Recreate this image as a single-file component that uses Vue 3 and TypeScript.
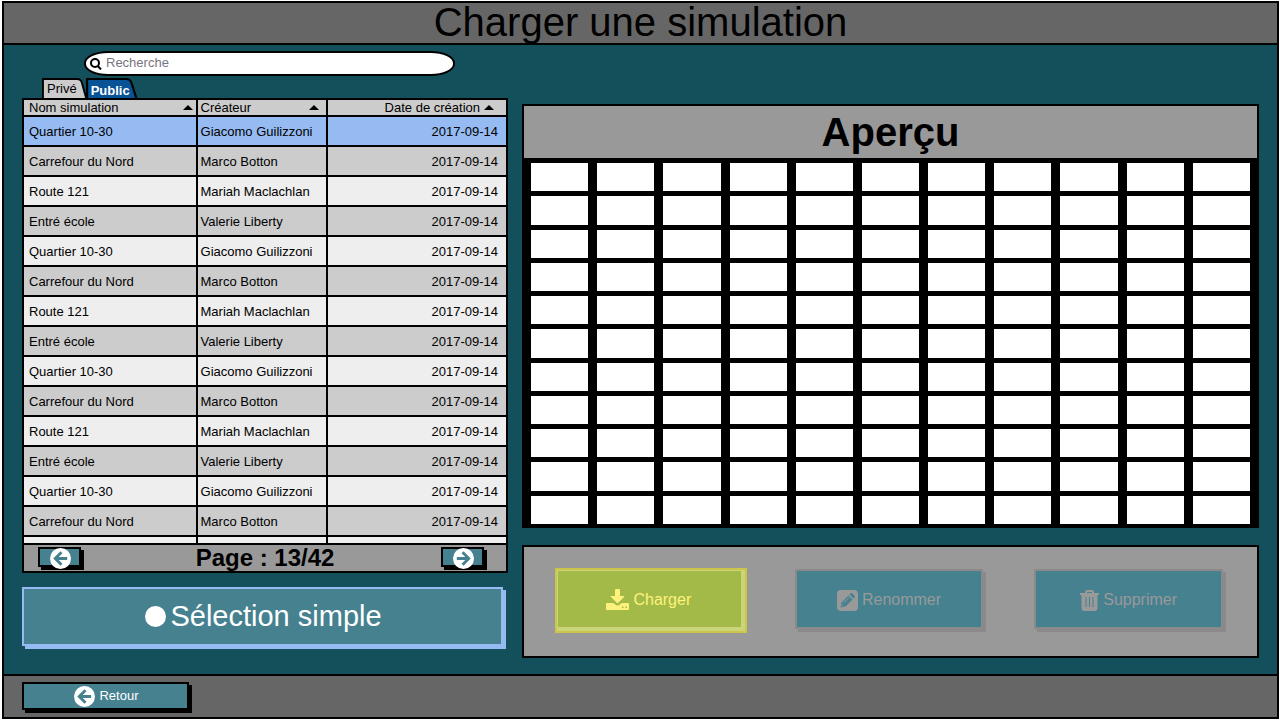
<script setup lang="ts">
import { computed, ref } from 'vue'

interface Simulation {
  id: number
  name: string
  author: string
  date: string
}

const samples: [string, string][] = [
  ['Quartier 10-30', 'Giacomo Guilizzoni'],
  ['Carrefour du Nord', 'Marco Botton'],
  ['Route 121', 'Mariah Maclachlan'],
  ['Entré école', 'Valerie Liberty'],
]

const simulations: Simulation[] = Array.from({ length: 14 }, (_, i) => ({
  id: i,
  name: samples[i % 4][0],
  author: samples[i % 4][1],
  date: '2017-09-14',
}))

const query = ref('')
const selected = ref(0)
const activeTab = ref('Public')
const tabs = ['Privé', 'Public']
const page = ref(13)
const pageCount = 42

const rows = computed(() =>
  simulations.filter((s) => s.name.toLowerCase().includes(query.value.toLowerCase())),
)
</script>

<template>
  <div class="screen">
    <header class="bar title-bar">
      <h1>Charger une simulation</h1>
    </header>

    <main class="content">
      <section class="left">
        <label class="search">
          <svg viewBox="0 0 12 12" aria-hidden="true">
            <circle cx="5" cy="5" r="4" />
            <path d="M8 8.2 11 11.4" />
          </svg>
          <input v-model="query" type="text" placeholder="Recherche" aria-label="Recherche" />
        </label>

        <nav class="tabs">
          <button
            v-for="tab in tabs"
            :key="tab"
            type="button"
            class="tab"
            :class="{ active: tab === activeTab }"
            @click="activeTab = tab"
          >
            <svg viewBox="0 0 48 22" preserveAspectRatio="none" aria-hidden="true">
              <path d="M1 22V1H37Q41 1 42 5L47 22" />
            </svg>
            <span>{{ tab }}</span>
          </button>
        </nav>

        <div class="table-box">
          <table>
            <colgroup>
              <col class="col-name" />
              <col class="col-author" />
              <col />
            </colgroup>
            <thead>
              <tr>
                <th><div>Nom simulation<i class="sort"></i></div></th>
                <th><div>Créateur<i class="sort"></i></div></th>
                <th><div class="end">Date de création<i class="sort"></i></div></th>
              </tr>
            </thead>
            <tbody>
              <tr
                v-for="row in rows"
                :key="row.id"
                :class="{ selected: row.id === selected }"
                @click="selected = row.id"
              >
                <td>{{ row.name }}</td>
                <td>{{ row.author }}</td>
                <td>{{ row.date }}</td>
              </tr>
              <tr>
                <td></td>
                <td></td>
                <td></td>
              </tr>
            </tbody>
          </table>
        </div>

        <div class="pager">
          <button type="button" class="sketch nav" aria-label="Page précédente" @click="page--">
            <svg class="round" viewBox="0 0 22 22" aria-hidden="true">
              <circle cx="11" cy="11" r="11" />
              <path d="M18 11H6M12 4.500 5.500 11l6.500 6.500" />
            </svg>
          </button>
          <strong>Page : {{ page }}/{{ pageCount }}</strong>
          <button type="button" class="sketch nav" aria-label="Page suivante" @click="page++">
            <svg class="round" viewBox="0 0 22 22" aria-hidden="true">
              <circle cx="11" cy="11" r="11" />
              <path d="M4 11h12M10 4.500l6.500 6.500-6.500 6.500" />
            </svg>
          </button>
        </div>

        <button type="button" class="sketch mode">
          <i class="dot"></i>Sélection simple
        </button>
      </section>

      <section class="right">
        <div class="preview">
          <h2>Aperçu</h2>
          <div class="cells">
            <div v-for="n in 121" :key="n" class="cell"></div>
          </div>
        </div>

        <div class="actions">
          <button type="button" class="action load">
            <svg class="icon-load" viewBox="0 0 23 21" aria-hidden="true">
              <path d="M9 1Q9 0 10 0h3q1 0 1 1v6h4q1 0 0 1l-6 6q-.5.5-1 0L5 8Q4 7 5 7h4Z" />
              <path
                fill-rule="evenodd"
                d="M1 14h6l3 2q1.500 1 3 0l3-2h6q1 0 1 1v5q0 1-1 1H1q-1 0-1-1v-5q0-1 1-1ZM16 17.500v1.500h1.500v-1.500ZM19.500 17.500v1.500H21v-1.500Z"
              />
            </svg>
            <span>Charger</span>
          </button>
          <button type="button" class="action idle">
            <svg class="icon-edit" viewBox="0 0 21 21" aria-hidden="true">
              <rect width="21" height="21" rx="4" />
              <path class="cut" d="M3.500 17.500 4.500 12.500 11.500 5.500 15.500 9.500 8.500 16.500ZM12.500 4.500l1-1q1-.8 2 0l2 2q.8 1 0 2l-1 1Z" />
              <path d="M5 14.500 6.500 16 5 16.500 4.500 16Z" />
              <path class="seam" d="M7 12.500 12 7.500" />
            </svg>
            <span>Renommer</span>
          </button>
          <button type="button" class="action idle">
            <svg class="icon-trash" viewBox="0 0 19 21" aria-hidden="true">
              <path class="handle" d="M6 4V2q0-1 1-1h5q1 0 1 1v2" />
              <path d="M0 3h19v2h-1.500v13q0 3-3 3h-10q-3 0-3-3V5H0Z" />
              <path class="slots" d="M6 7v10M9.500 7v10M13 7v10" />
            </svg>
            <span>Supprimer</span>
          </button>
        </div>
      </section>
    </main>

    <footer class="bar foot-bar">
      <button type="button" class="sketch back">
        <svg class="round" viewBox="0 0 22 22" aria-hidden="true">
          <circle cx="11" cy="11" r="11" />
          <path d="M18 11H6M12 4.500 5.500 11l6.500 6.500" />
        </svg>
        Retour
      </button>
    </footer>
  </div>
</template>

<style>
body {
  margin: 0;
  background: #fff;
}
</style>

<style scoped>
* {
  box-sizing: border-box;
}

.screen {
  display: flex;
  flex-direction: column;
  height: 100vh;
  padding: 1px 1px 1px 2px;
  font-family: 'Liberation Sans', Arial, sans-serif;
  font-size: 13px;
  color: #000;
}

button {
  padding: 0;
  border: 0;
  font: inherit;
  cursor: pointer;
}

.bar {
  flex: none;
  display: flex;
  align-items: center;
  border: 2px solid #000;
  background: #666;
}

.title-bar {
  justify-content: center;
  height: 44px;
  padding-bottom: 2px;
}

h1 {
  margin: 0;
  font-size: 40px;
  font-weight: 400;
  line-height: 40px;
}

.content {
  flex: 1;
  min-height: 0;
  display: grid;
  grid-template-columns: 486fr 737fr;
  gap: 14px;
  padding: 0 18px;
  border: solid #000;
  border-width: 0 2px;
  background: #144f5c;
}

.left,
.right {
  display: flex;
  flex-direction: column;
  min-width: 0;
  min-height: 0;
}

.left {
  padding: 6px 0 26px;
}

.search {
  display: flex;
  align-items: center;
  gap: 4px;
  height: 25px;
  margin: 0 53px 0 62px;
  padding: 0 12px 0 4px;
  border: 2px solid #000;
  border-radius: 24px / 12px;
  background: #fff;
}

.search svg {
  width: 12px;
  height: 12px;
  fill: none;
  stroke: #000;
  stroke-width: 2;
}

.search input {
  flex: 1;
  min-width: 0;
  height: 20px;
  padding: 0 0 2px;
  border: 0;
  outline: 0;
  background: none;
  font: inherit;
}

.search input::placeholder {
  color: #777580;
  opacity: 1;
}

.tabs {
  display: flex;
  height: 22px;
  margin: 2px 0 0 20px;
}

.tab {
  position: relative;
  height: 22px;
  padding: 0 11px 0 5px;
  background: none;
  line-height: 22px;
}

.tab + .tab {
  margin-left: -2px;
  padding-right: 8px;
}

.tab svg {
  position: absolute;
  inset: 0;
  width: 100%;
  height: 100%;
  fill: #ccc;
  stroke: #000;
  stroke-width: 2;
}

.tab span {
  position: relative;
}

.tab.active {
  color: #fff;
  font-weight: 700;
  line-height: 26px;
}

.tab.active svg {
  fill: #085296;
}

.table-box {
  flex: 1;
  min-height: 0;
  margin-top: -2px;
  overflow: hidden;
  border: 2px solid #000;
  border-bottom: 0;
  background: #eee;
  position: relative;
}

table {
  width: 100%;
  border-collapse: separate;
  border-spacing: 0;
  table-layout: fixed;
}

.col-name {
  width: 36%;
}

.col-author {
  width: 27%;
}

th,
td {
  padding: 0 2px 0 3px;
  border-right: 2px solid #000;
  border-bottom: 2px solid #000;
  font-weight: 400;
  text-align: left;
  white-space: nowrap;
}

th:first-child,
td:first-child {
  padding-left: 5px;
}

th:last-child,
td:last-child {
  border-right: 0;
  text-align: right;
}

th {
  height: 17px;
  background: #ccc;
  line-height: 15px;
}

th div {
  display: flex;
  align-items: center;
  justify-content: space-between;
  padding-right: 1px;
}

th:nth-child(2) div {
  padding-right: 5px;
}

th div.end {
  justify-content: flex-end;
  gap: 4px;
  padding-right: 10px;
}

.sort {
  width: 0;
  height: 0;
  border: solid transparent;
  border-width: 0 5px 5px;
  border-bottom-color: #000;
}

td {
  height: 30px;
  padding-top: 2px;
  line-height: 26px;
}

td:last-child {
  padding-right: 8px;
}

tbody tr:nth-child(even) {
  background: #ccc;
}

tbody tr.selected {
  background: #95bbf2;
}

.pager {
  flex: none;
  display: flex;
  align-items: center;
  justify-content: space-between;
  height: 30px;
  padding: 0 22px 0 14px;
  border: 2px solid #000;
  background: #999;
}

.pager strong {
  padding-left: 8px;
  font-size: 24px;
  line-height: 26px;
}

.sketch {
  display: flex;
  align-items: center;
  justify-content: center;
  border: 2px solid #000;
  background: #468190;
  color: #fff;
}

.nav {
  width: 43px;
  height: 20px;
  margin-bottom: 2px;
  box-shadow: 3px 3px 0 #000;
}

.round {
  flex: none;
  width: 21px;
  height: 21px;
  margin: 2px 0 0 2px;
  fill: #fff;
}

.round path {
  fill: none;
  stroke: #468190;
  stroke-width: 3;
}

.mode {
  flex: none;
  gap: 4px;
  height: 59px;
  margin: 14px 5px 2px 0;
  padding-left: 2px;
  border-color: #95bbf2;
  box-shadow: 3px 3px 0 #95bbf2;
  font-size: 29px;
}

.dot {
  width: 21px;
  height: 21px;
  border-radius: 50%;
  background: #fff;
}

.right {
  gap: 17px;
  padding: 59px 0 16px;
}

.preview {
  flex: 1;
  min-height: 0;
  display: flex;
  flex-direction: column;
  border: 2px solid #000;
  background: #999;
}

h2 {
  margin: 0;
  font-size: 40px;
  line-height: 52px;
  text-align: center;
}

.cells {
  flex: 1;
  min-height: 0;
  display: grid;
  grid-template-columns: repeat(11, 1fr);
  grid-template-rows: repeat(11, 1fr);
  gap: 5px 9px;
  padding: 5px 7px 2px;
  background: #000;
}

.cell {
  background: #fff;
}

.actions {
  flex: none;
  display: grid;
  grid-template-columns: repeat(3, 1fr);
  gap: 48px;
  padding: 21px 31px 23px;
  border: 2px solid #000;
  background: #999;
}

.action {
  display: flex;
  align-items: center;
  justify-content: center;
  gap: 4px;
  height: 65px;
  font-size: 16px;
}

.load {
  padding: 0 4px 2px 0;
  border: 2px solid #cdc549;
  background: #a3ba49;
  box-shadow: inset 1px 1px 0 #c9d578, inset -4px -4px 0 #c9d578;
  color: #fff27c;
}

.idle {
  height: 60px;
  margin: 1px 3px 4px 0;
  padding-top: 2px;
  border: 2px solid #8a8a8a;
  background: #468190;
  box-shadow: 3px 3px 0 #8a8a8a;
  color: #999;
}

.action svg {
  flex: none;
  fill: currentColor;
}

.icon-load {
  width: 23px;
  height: 21px;
}

.icon-edit {
  width: 21px;
  height: 21px;
}

.action .cut {
  fill: #468190;
}

.action .seam {
  fill: none;
  stroke: #999;
  stroke-width: 1;
}

.icon-trash {
  width: 19px;
  height: 21px;
}

.action .handle {
  fill: none;
  stroke: currentColor;
  stroke-width: 2;
}

.action .slots {
  fill: none;
  stroke: #468190;
  stroke-width: 1;
}

.foot-bar {
  height: 45px;
  padding: 0 18px;
}

.back {
  gap: 4px;
  width: 167px;
  height: 28px;
  margin-bottom: 2px;
  box-shadow: 3px 3px 0 #000;
}
</style>
